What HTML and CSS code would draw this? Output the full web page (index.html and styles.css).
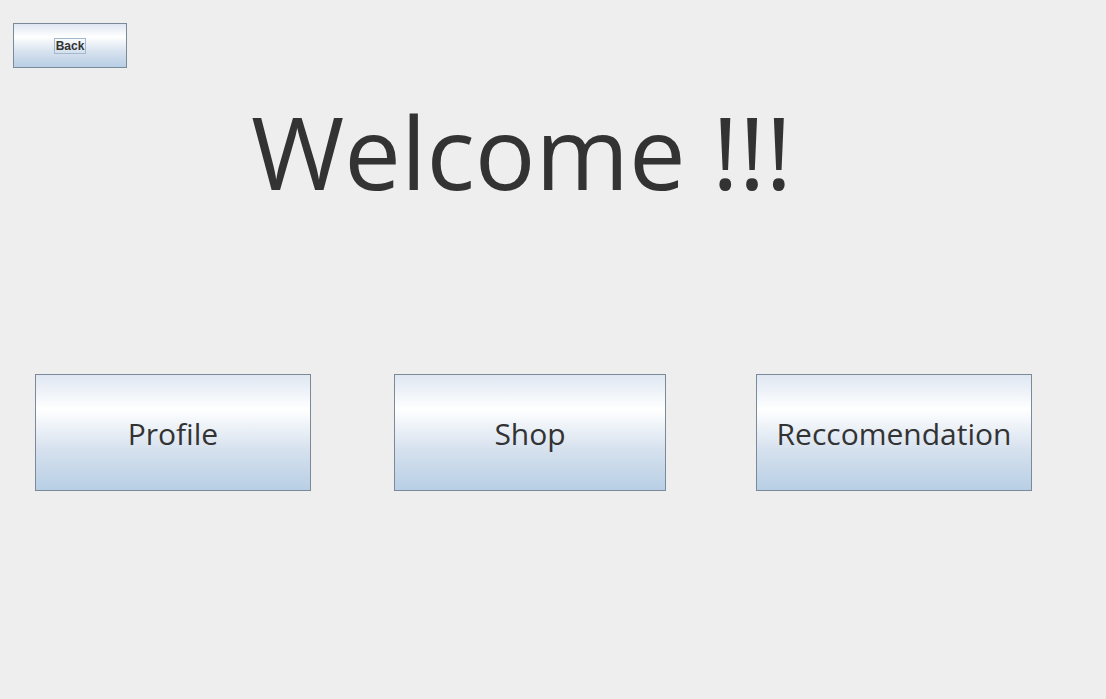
FILE: index.html
```html
<!DOCTYPE html>
<html>
<head>
<meta charset="utf-8">
<link rel="stylesheet" href="styles.css">
</head>
<body>
<div class="page">
  <div class="topbar">
    <button class="back"><span class="focus">Back</span></button>
  </div>
  <h1 class="title">Welcome !!!</h1>
  <div class="actions">
    <button class="big profile">Profile</button>
    <button class="big shop">Shop</button>
    <button class="big rec">Reccomendation</button>
  </div>
</div>
</body>
</html>
```

FILE: styles.css
```css
html, body {
  margin: 0;
  padding: 0;
  background: #eeeeee;
}
.page {
  width: 1106px;
  height: 699px;
  overflow: hidden;
  font-family: "Open Sans", "Noto Sans", sans-serif;
  color: #333333;
}
.topbar {
  padding: 23px 0 0 13px;
}
button {
  box-sizing: border-box;
  border: 1px solid #7a8a99;
  background: linear-gradient(to bottom, #dfe7f2 0%, #ffffff 30%, #d6e1ee 65%, #b8cfe5 100%);
  margin: 0;
  padding: 0;
  cursor: default;
  color: #333333;
}
.back {
  width: 114px;
  height: 45px;
  display: flex;
  align-items: center;
  justify-content: center;
  font-family: "Liberation Sans", Arial, sans-serif;
  font-weight: bold;
  font-size: 12px;
  padding-top: 1px;
}
.focus {
  border: 1px solid #a3b8cc;
  padding: 0 1px;
  line-height: 14px;
}
.title {
  margin: 0;
  padding: 18px 0 0 251px;
  font-weight: normal;
  font-size: 101px;
  line-height: 130px;
  height: 170px;
  white-space: nowrap;
}
.actions {
  display: flex;
  padding: 118px 0 0 35px;
}
.big {
  height: 117px;
  font-family: "Open Sans", "Noto Sans", sans-serif;
  font-size: 30px;
  display: flex;
  align-items: center;
  justify-content: center;
  padding-top: 1px;
}
.profile { width: 276px; }
.shop { width: 272px; margin-left: 83px; }
.rec { width: 276px; margin-left: 90px; }
```
